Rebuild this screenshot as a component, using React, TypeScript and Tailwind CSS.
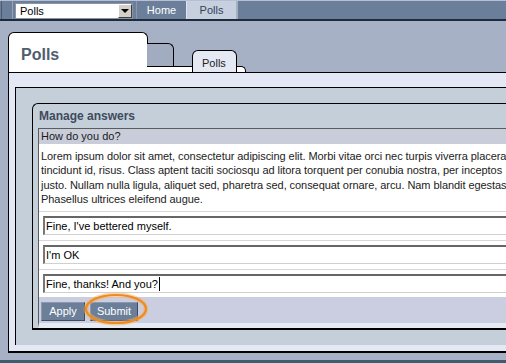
import React from "react";

const paragraph = [
  "Lorem ipsum dolor sit amet, consectetur adipiscing elit. Morbi vitae orci nec turpis viverra placerat",
  "tincidunt id, risus. Class aptent taciti sociosqu ad litora torquent per conubia nostra, per inceptos",
  "justo. Nullam nulla ligula, aliquet sed, pharetra sed, consequat ornare, arcu. Nam blandit egestas",
  "Phasellus ultrices eleifend augue.",
];

const answers = ["Fine, I've bettered myself.", "I'm OK", "Fine, thanks! And you?"];

export default function App() {
  return (
    <div className="relative h-[363px] w-[506px] overflow-hidden bg-[#a7b1c6] font-['Liberation_Sans',Arial,sans-serif] text-black">
      {/* Top bar */}
      <div className="flex h-[21px] border-t border-b-2 border-t-[#b9bfd3] border-b-[#1e2b3c] bg-[#6c7f9a]">
        <div className="ml-[1px] w-[12px] border-l border-r border-l-[#4b5a72] border-r-[#95a2b7]" />
        <div className="ml-[2px] mt-[2px] flex h-[16px] w-[118px] border border-[#8b94a3] bg-white">
          <span className="flex-1 pl-[4px] text-[11px] leading-[14px]">Polls</span>
          <span className="flex w-[14px] items-center justify-center border border-t-white border-l-white border-b-[#404040] border-r-[#404040] bg-[#d4d0c8]">
            <span className="border-x-[4px] border-t-[4px] border-x-transparent border-t-black" />
          </span>
        </div>
        <div className="ml-[3px] flex w-[50px] items-center justify-center border-l border-[#8898b0] text-[11px] text-white">
          Home
        </div>
        <div className="flex w-[50px] items-center justify-center border-l border-[#dfe5ee] bg-[#c7d0de] text-[11px] text-[#33425a]">
          Polls
        </div>
        <div className="w-[2px] bg-[#a3afc2]" />
      </div>

      {/* Tabs */}
      <div className="relative ml-[8px] mt-[11px] flex h-[40px] items-end">
        <div className="h-[40px] w-[140px] rounded-t-[6px] border border-b-0 border-black bg-white pl-[12px] pt-[13px] text-[16px] font-bold leading-[18px] text-[#515c6f]">
          Polls
        </div>
        <div className="relative mb-[6px] ml-[-1px] h-[23px] w-[27px] rounded-tr-[6px] border-t border-r border-black bg-[#a1acc1]" />
        <div className="absolute left-[139px] top-[34px] h-[6px] w-[99px] rounded-tr-[5px] border-t border-r border-black bg-white" />
        <div className="relative z-10 ml-[18px] h-[22px] w-[45px] rounded-t-[6px] border border-b-0 border-black bg-[#e5e9f4] pl-[9px] pt-[5px] text-[11px] leading-[14px] text-[#222]">
          Polls
        </div>
      </div>

      {/* Panel */}
      <div className="ml-[8px] border-l border-t border-b-2 border-black bg-[#e4e8f4] pb-[6px] pl-[6px] pt-[14px]">
        <div className="border-l border-t border-black bg-[#c5cfda] pb-[15px] pl-[16px] pt-[15px]">
          <div className="rounded-tl-[6px] border-l border-t border-b-2 border-black pl-[5px]">
            <div className="pb-[5px] pl-[1px] pt-[5px] text-[12px] font-bold leading-[14px] text-[#3e4a5d]">
              Manage answers
            </div>
            <div className="overflow-hidden border-l border-t border-b-[5px] border-l-[#5c5c5c] border-t-[#5c5c5c] border-b-[#e4ebf2]">
              <div className="h-[15px] bg-[#c9cdd9] pl-[2px] text-[11px] leading-[15px] text-[#1a1a1a]">
                How do you do?
              </div>
              <div className="h-[67px] bg-white pl-[2px] pt-[5px] text-[11px] leading-[14.4px] tracking-[-0.06px] text-[#222]">
                {paragraph.map((line) => (
                  <div key={line} className="whitespace-nowrap">
                    {line}
                  </div>
                ))}
              </div>
              {answers.map((a, i) => (
                <div
                  key={a}
                  className={
                    i === answers.length - 1
                      ? "border-t border-[#d6d6d6] bg-white pb-[4px] pl-[4px] pt-[4px]"
                      : "border-t border-[#d6d6d6] bg-white pb-[5px] pl-[4px] pt-[4px]"
                  }
                >
                  <div className="flex h-[19px] items-center whitespace-nowrap border-l-2 border-t-2 border-b border-l-[#777] border-t-[#666] border-b-[#d0d0d0] bg-white pl-[1px] text-[11px] leading-[14px]">
                    {a}
                    {i === answers.length - 1 && <span className="ml-[1px] inline-block h-[14px] w-[1px] bg-black" />}
                  </div>
                </div>
              ))}
              <div className="flex bg-[#cbcee0] pb-[2px] pl-[2px] pt-[5px]">
                <button className="h-[19px] w-[44px] border border-t-[#8a99b0] border-l-[#8a99b0] border-b-[#3f4c60] border-r-[#3f4c60] bg-[#6c7f99] text-[11px] text-white">
                  Apply
                </button>
                <button className="ml-[5px] h-[19px] w-[48px] border border-t-[#8a99b0] border-l-[#8a99b0] border-b-[#3f4c60] border-r-[#3f4c60] bg-[#6c7f99] text-[11px] text-white">
                  Submit
                </button>
              </div>
            </div>
          </div>
        </div>
      </div>
      <div className="mt-[7px] h-[3px] bg-[#3d5d6e]" />

      {/* highlight ring */}
      <svg className="pointer-events-none absolute left-[80px] top-[288px]" width="74" height="44" viewBox="0 0 74 44">
        <ellipse cx="36" cy="21" rx="30" ry="14" fill="none" stroke="#f6b064" strokeOpacity="0.5" strokeWidth="5" />
        <ellipse cx="36" cy="21" rx="30" ry="14" fill="none" stroke="#ee8a1f" strokeWidth="2.2" />
      </svg>
    </div>
  );
}
